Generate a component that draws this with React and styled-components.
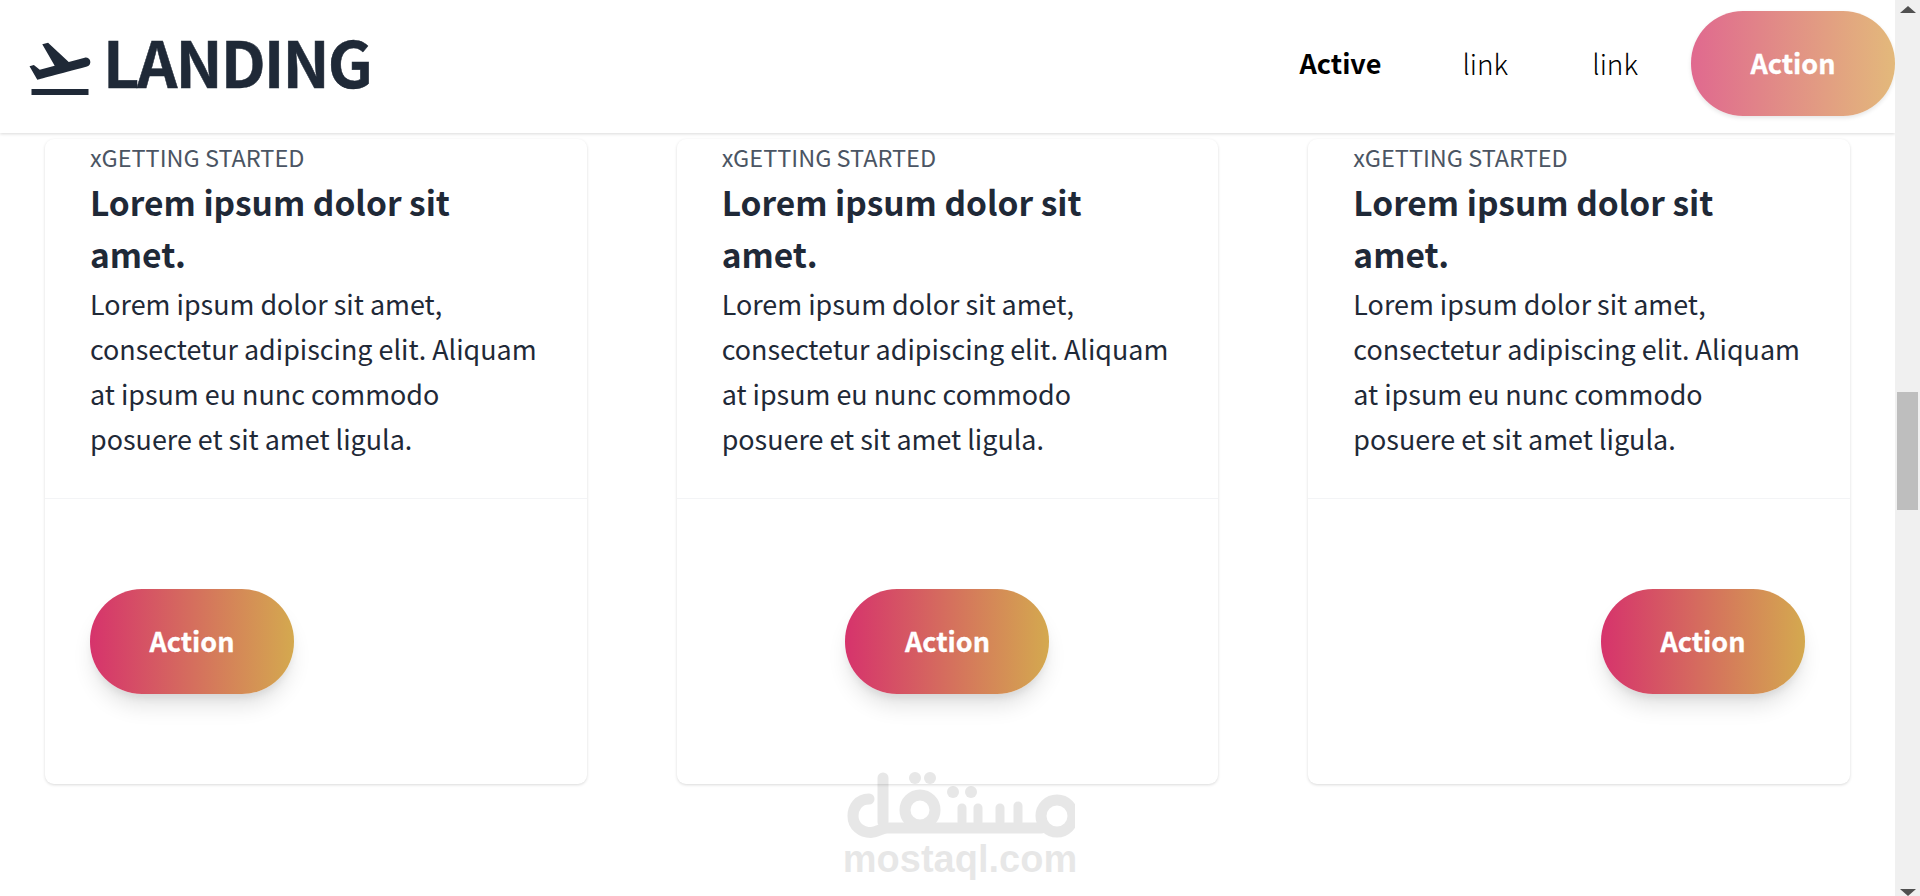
import React from 'react'
import styled, { createGlobalStyle } from 'styled-components'
import { MdFlightTakeoff } from 'react-icons/md'

const Global = createGlobalStyle`
  html, body {
    margin: 0;
    height: 100%;
    overflow: hidden;
    background: #fff;
  }
  body {
    font-family: "Noto Sans CJK SC", "Noto Sans", sans-serif;
  }
`

const Page = styled.div`
  display: flex;
  height: 896px;
  position: relative;
  overflow: hidden;
`

const Main = styled.div`
  flex: 1;
  min-width: 0;
`

const Nav = styled.header`
  height: 133px;
  box-sizing: border-box;
  display: flex;
  align-items: center;
  justify-content: space-between;
  padding-left: 24px;
  padding-bottom: 6px;
  background: #fff;
  box-shadow: 0 1px 3px rgba(0, 0, 0, 0.15);
`

const Logo = styled.div`
  display: flex;
  align-items: center;
  gap: 7px;
  color: #1f2937;

  svg {
    margin-top: 8px;
  }
`

const LogoText = styled.span`
  font-size: 63px;
  font-weight: 700;
  letter-spacing: -2px;
  line-height: 72px;
  margin-bottom: 6px;
  -webkit-text-stroke: 0.5px #1f2937;
`

const Menu = styled.nav`
  display: flex;
  align-items: center;
  gap: 84px;
`

const MenuItem = styled.a`
  font-size: ${p => (p.$active ? '27px' : '28px')};
  line-height: 40px;
  margin-bottom: 2px;
  margin-right: ${p => (p.$active ? '-3px' : '0')};
  color: #000;
  font-weight: ${p => (p.$active ? 700 : 300)};
`

const ActionButton = styled.button`
  width: 204px;
  height: 105px;
  border: none;
  border-radius: 52px;
  padding: 0 0 2px;
  font-family: inherit;
  font-size: 27px;
  font-weight: 700;
  color: #fff;
  -webkit-text-stroke: 0.3px #fff;
  background: linear-gradient(90deg, #d6336c, #d4a94f);
  box-shadow: 0 15px 22px -4px rgba(0, 0, 0, 0.12), 0 6px 9px -3px rgba(0, 0, 0, 0.08);
`

const NavButton = styled(ActionButton)`
  margin-left: -31px;
  background: linear-gradient(90deg, #e0698f, #e3b97b);
  box-shadow: 0 2px 4px rgba(0, 0, 0, 0.1);
`

const Cards = styled.section`
  display: grid;
  grid-template-columns: repeat(3, 1fr);
  gap: 90px;
  padding: 6px 45px 0;
`

const Card = styled.article`
  background: #fff;
  border-radius: 9px;
  box-shadow: 0 1px 3px rgba(0, 0, 0, 0.15);
`

const CardBody = styled.div`
  height: 360px;
  box-sizing: border-box;
  padding: 1px 45px 0;
  border-bottom: 1px solid #f3f4f6;
`

const Eyebrow = styled.div`
  font-size: 23.5px;
  line-height: 34px;
  margin-bottom: 2px;
  color: #4b5563;
`

const Title = styled.h2`
  margin: 0 0 1px;
  font-size: 33.5px;
  line-height: 52px;
  font-weight: 700;
  color: #1f2937;
`

const Text = styled.p`
  margin: 0;
  font-size: 26.9px;
  line-height: 45px;
  color: #1f2937;
`

const CardFooter = styled.div`
  display: flex;
  justify-content: ${p => p.$align};
  padding: 90px 45px;
`

const Scrollbar = styled.aside`
  width: 25px;
  flex: none;
  background: #f0f0f0;
  display: flex;
  flex-direction: column;
  align-items: center;
`

const Arrow = styled.div`
  width: 0;
  height: 0;
  margin-top: ${p => (p.$down ? 'auto' : '6px')};
  border-left: 8px solid transparent;
  border-right: 8px solid transparent;
  ${p => (p.$down ? 'border-top: 7px solid #505050;' : 'border-bottom: 7px solid #505050;')}
`

const Thumb = styled.div`
  width: 21px;
  height: 118px;
  margin-top: 379px;
  background: #bebebe;
`

const Watermark = styled.div`
  position: absolute;
  left: 845px;
  top: 772px;
  width: 230px;
  color: #000;
  opacity: 0.09;
  display: flex;
  flex-direction: column;
  align-items: center;
`

const WatermarkText = styled.div`
  font-family: "Liberation Sans", Arial, sans-serif;
  font-weight: 700;
  font-size: 38px;
  line-height: 38px;
  margin-top: 1px;
`

const cards = ['flex-start', 'center', 'flex-end']

export default function App() {
  return (
    <Page>
      <Global />
      <Main>
        <Nav>
          <Logo>
            <MdFlightTakeoff size={72} />
            <LogoText>LANDING</LogoText>
          </Logo>
          <Menu>
            <MenuItem $active>Active</MenuItem>
            <MenuItem>link</MenuItem>
            <MenuItem>link</MenuItem>
            <NavButton>Action</NavButton>
          </Menu>
        </Nav>
        <Cards>
          {cards.map(align => (
            <Card key={align}>
              <CardBody>
                <Eyebrow>xGETTING STARTED</Eyebrow>
                <Title>Lorem ipsum dolor sit amet.</Title>
                <Text>Lorem ipsum dolor sit amet, consectetur adipiscing elit. Aliquam at ipsum eu nunc commodo posuere et sit amet ligula.</Text>
              </CardBody>
              <CardFooter $align={align}>
                <ActionButton>Action</ActionButton>
              </CardFooter>
            </Card>
          ))}
        </Cards>
      </Main>
      <Scrollbar>
        <Arrow />
        <Thumb />
        <Arrow $down />
      </Scrollbar>
      <Watermark>
        <svg width="230" height="67" viewBox="0 0 230 67" fill="none" stroke="currentColor" strokeWidth="11" strokeLinecap="round">
          <path d="M24 27 C13 27 8 36 8 44 C8 54 16 60.5 26 60.5 C32 60.5 36 56 42 56 L196 56" />
          <path d="M38 6 V50" />
          <path d="M117 36 V50 M133 36 V50 M155 36 V50 M173 34 V50" strokeWidth="9" />
          <circle cx="75" cy="38" r="15" />
          <circle cx="212" cy="44" r="16" />
          <g fill="currentColor" stroke="none">
            <circle cx="70" cy="6" r="6" />
            <circle cx="85" cy="6" r="6" />
            <circle cx="108" cy="20" r="6" />
            <circle cx="126" cy="20" r="6" />
          </g>
        </svg>
        <WatermarkText>mostaql.com</WatermarkText>
      </Watermark>
    </Page>
  )
}
